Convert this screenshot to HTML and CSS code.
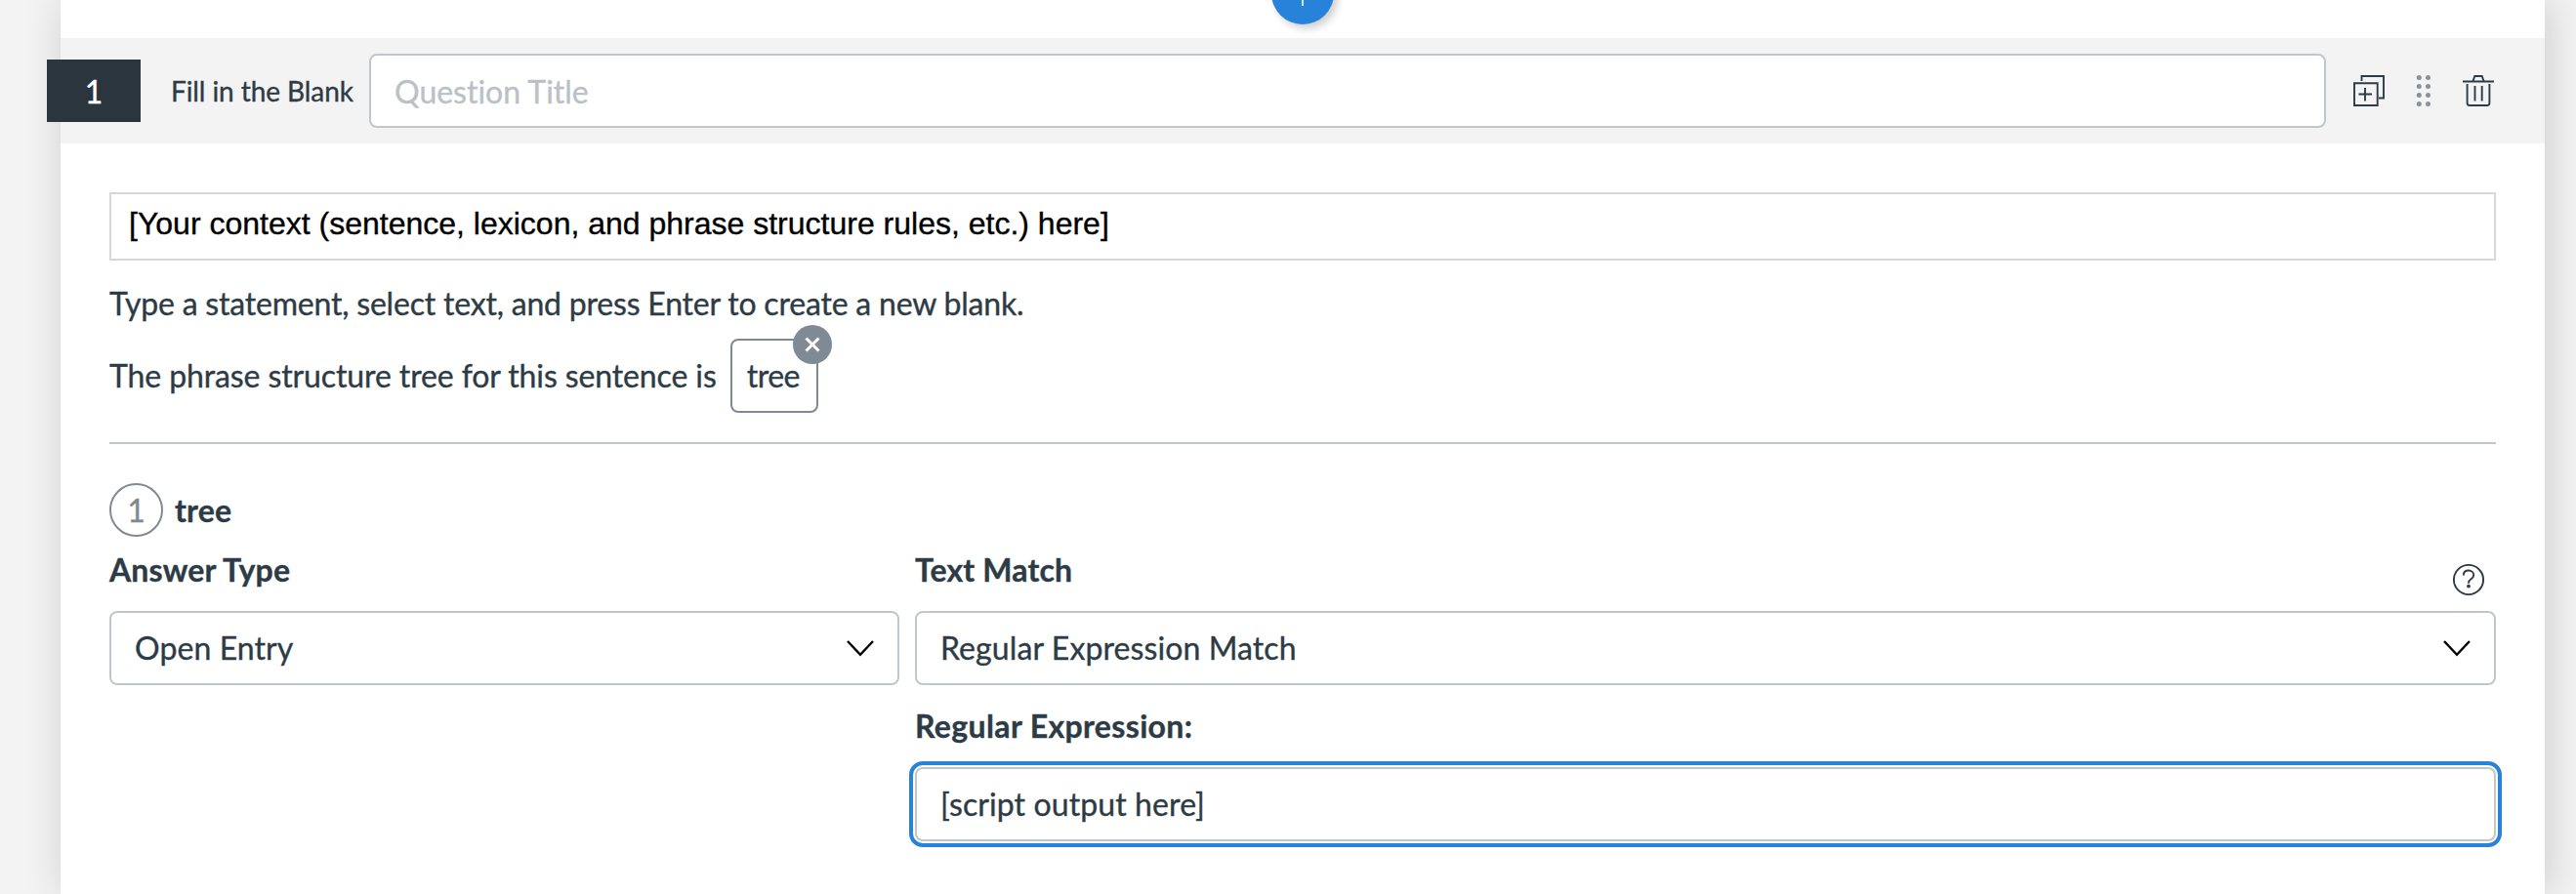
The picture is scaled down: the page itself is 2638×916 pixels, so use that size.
FILE: index.html
```html
<!DOCTYPE html>
<html lang="en">
<head>
<meta charset="utf-8">
<title>Quiz Editor</title>
<link rel="stylesheet" href="styles.css">
</head>
<body>
<main class="panel">
  <button class="add" aria-label="Add item"><svg width="32" height="32" viewBox="0 0 32 32"><path d="M16 3v26M3 16h26"/></svg></button>
  <header class="question-bar">
    <span class="number">1</span>
    <span class="kind">Fill in the Blank</span>
    <div class="field title-field"><span>Question Title</span></div>
    <div class="tools">
      <svg class="icon" width="32" height="32" viewBox="0 0 32 32"><path d="M1 8.300h23.700v22.700H1zM8.500 6V1H31v22.500h-5M12 13v13.500M5.500 19.500h13.500"/></svg>
      <svg class="grip" width="16" height="32" viewBox="0 0 16 32"><circle cx="3.300" cy="2.500" r="2.500"/><circle cx="12.500" cy="2.500" r="2.500"/><circle cx="3.300" cy="11.500" r="2.500"/><circle cx="12.500" cy="11.500" r="2.500"/><circle cx="3.300" cy="20.500" r="2.500"/><circle cx="12.500" cy="20.500" r="2.500"/><circle cx="3.300" cy="29.500" r="2.500"/><circle cx="12.500" cy="29.500" r="2.500"/></svg>
      <svg class="icon" width="32" height="32" viewBox="0 0 32 32"><path d="M0 6.500h32M10.500 6l1.800-5h7.400l1.800 5M4.600 9v19.500q0 2.500 2.500 2.500h17.800q2.500 0 2.500-2.500V9M12.500 11v15.500M19.700 11v15.500"/></svg>
    </div>
  </header>
  <section class="content">
    <div class="context"><span class="context-text">[Your context (sentence, lexicon, and phrase structure rules, etc.) here]</span></div>
    <p class="hint">Type a statement, select text, and press Enter to create a new blank.</p>
    <div class="statement">
      <span class="sentence">The phrase structure tree for this sentence is</span>
      <span class="chip">tree<span class="remove"><svg width="16" height="16" viewBox="0 0 16 16"><path d="M1.500 1.500l13 13M14.500 1.500l-13 13"/></svg></span></span>
    </div>
    <div class="answer-head"><span class="ring">1</span><b>tree</b></div>
    <div class="grid">
      <b class="label">Answer Type</b>
      <div class="label-row"><b class="label">Text Match</b>
        <svg class="icon help" width="32" height="32" viewBox="0 0 32 32"><circle cx="16" cy="16" r="15.100"/><path d="M10.800 11.500c0-3.200 2.200-5 5.200-5s5.200 2 5.200 4.700c0 4.300-5.200 3.900-5.200 8v.5"/><circle class="dot" cx="16" cy="22.600" r="1.900"/></svg>
      </div>
      <div class="field select"><span>Open Entry</span><svg class="chevron" width="28" height="17" viewBox="0 0 28 17"><path d="M1 1L14 14.800L27 1"/></svg></div>
      <div class="field select"><span>Regular Expression Match</span><svg class="chevron" width="28" height="17" viewBox="0 0 28 17"><path d="M1 1L14 14.800L27 1"/></svg></div>
      <b class="label wide second">Regular Expression:</b>
      <div class="field focused second"><span>[script output here]</span></div>
    </div>
  </section>
</main>
</body>
</html>
```
FILE: styles.css
```css
* { box-sizing: border-box; }
body {
  margin: 0;
  height: 916px;
  overflow: hidden;
  background: #f3f3f3;
  color: #2d3b45;
  font: 32px/48px Lato, sans-serif;
  font-variant-ligatures: none;
  -webkit-text-stroke: .35px currentColor;
}
.panel {
  position: relative;
  width: 2544px;
  height: 916px;
  margin-left: 62px;
  padding-top: 39px;
  background: #fff;
  box-shadow: 4px 0 40px rgba(0, 0, 0, .16);
}
svg { display: block; flex: none; fill: none; }
.add {
  position: absolute;
  left: 1240px;
  top: -39px;
  width: 64px;
  height: 64px;
  padding: 16px;
  border: 0;
  border-radius: 50%;
  background: #2683d9;
  box-shadow: 4px 4px 8px rgba(0, 0, 0, .2);
}
.add svg { stroke: #fff; stroke-width: 1.6; }
.question-bar {
  display: flex;
  align-items: center;
  height: 108px;
  margin-left: -14px;
  padding-right: 52px;
  background: linear-gradient(#f3f3f3, #f3f3f3) 14px 0 no-repeat;
}
.number {
  width: 96px;
  height: 64px;
  background: #2b353d;
  color: #fff;
  line-height: 66px;
  text-align: center;
}
.kind {
  width: 234px;
  padding-left: 31px;
  font-size: 28px;
  letter-spacing: -.08px;
  white-space: nowrap;
}
.field {
  display: flex;
  align-items: center;
  justify-content: space-between;
  height: 76px;
  padding: 0 24px;
  border: 2px solid #c1c6ca;
  border-radius: 8px;
  background: #fff;
  white-space: nowrap;
}
.title-field { flex: 1; color: #bac1c6; }
.title-field span { padding-top: 2px; }
.tools {
  display: flex;
  justify-content: space-between;
  width: 144px;
  margin-left: 28px;
}
.icon { stroke: #2d3b45; stroke-width: 1.9; }
.icon .dot { fill: #2d3b45; stroke: none; }
.grip { fill: #8b9196; }
.content { padding: 50px 50px 0; }
.context {
  height: 70px;
  padding: 6px 18px;
  border: 2px solid #d7d7d7;
  color: #000;
  font-family: "Liberation Sans", sans-serif;
}
.hint { margin: 20px 0 12px; letter-spacing: -.2px; }
.sentence { letter-spacing: -.11px; }
.statement {
  display: flex;
  align-items: center;
  gap: 14px;
  height: 108px;
  padding-bottom: 30px;
  border-bottom: 2px solid #c1c6ca;
}
.chip {
  position: relative;
  width: 90px;
  height: 76px;
  padding: 12px 15px;
  border: 2px solid #7f8a94;
  border-radius: 8px;
  letter-spacing: -.5px;
}
.remove {
  position: absolute;
  top: -16px;
  right: -16px;
  width: 40px;
  height: 40px;
  padding: 12px;
  border-radius: 50%;
  background: #7f8a94;
}
.remove svg { stroke: #fff; stroke-width: 3; }
.answer-head { display: flex; align-items: center; gap: 12px; margin-top: 40px; height: 55px; }
.ring {
  width: 55px;
  height: 55px;
  border: 2px solid #7f8a94;
  border-radius: 50%;
  color: #7f8a94;
  line-height: 51px;
  text-align: center;
}
b { letter-spacing: .15px; }
.wide { letter-spacing: .36px; }
.grid {
  display: grid;
  grid-template-columns: 809px 1619px;
  grid-template-rows: 66px 76px 84px 76px;
  column-gap: 16px;
  margin-top: 10px;
}
.label-row { display: flex; justify-content: space-between; padding-right: 12px; }
.help { margin-top: 18px; }
.second { grid-column: 2; }
b.second { padding-top: 18px; }
.select, .focused { letter-spacing: .1px; }
.chevron { stroke: #000; stroke-width: 2.4; }
.focused { outline: 4px solid #2683d9; outline-offset: 2px; }
```
